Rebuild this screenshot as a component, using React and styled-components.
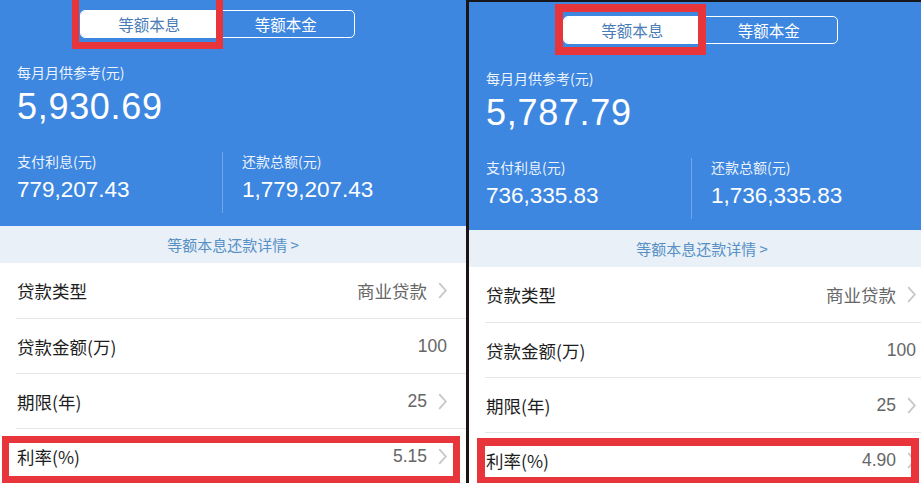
import styled, { createGlobalStyle } from "styled-components"

const GlobalStyle = createGlobalStyle`
  html, body {
    margin: 0;
    padding: 0;
    background: #141414;
  }
  * {
    box-sizing: border-box;
  }
`;

const Screen = styled.div`
  display: flex;
  width: 921px;
  height: 483px;
  overflow: hidden;
  font-family: "Noto Sans CJK SC", "Liberation Sans", sans-serif;
`;

const Splitter = styled.div`
  width: 3px;
  flex-shrink: 0;
  background: #1a1414;
`;

const Panel = styled.div`
  position: relative;
  width: ${p => p.$w}px;
  height: 483px;
  flex-shrink: 0;
  overflow: hidden;
  background: #fff;
  border-top: ${p => p.$topLine}px solid #15171c;
`;

const Inner = styled.div`
  width: 466px;
`;

const Header = styled.div`
  height: ${p => p.$h}px;
  padding: ${p => p.$segTop}px 0 0 17px;
  background: #3e87e0;
  color: #fff;
`;

const Segment = styled.div`
  display: flex;
  width: 275px;
  height: 28px;
  margin-left: ${p => p.$segLeft - 17}px;
  border: 1px solid #fff;
  border-radius: 5px;
  overflow: hidden;
`;

const Tab = styled.div`
  flex: 1;
  display: flex;
  align-items: center;
  justify-content: center;
  font-size: 15.5px;
  background: ${p => (p.$active ? "#fff" : "transparent")};
  color: ${p => (p.$active ? "#4a7db5" : "#fff")};
`;

const Label = styled.div`
  margin-top: ${p => p.$mt}px;
  font-size: 14px;
  line-height: 20px;
  color: rgba(255, 255, 255, 0.92);
`;

const BigValue = styled.div`
  margin-top: 5px;
  font-family: "Liberation Sans", sans-serif;
  font-size: 36px;
  line-height: 40px;
  letter-spacing: 0.7px;
`;

const Stats = styled.div`
  display: flex;
  margin-top: 24px;
`;

const Stat = styled.div`
  width: ${p => p.$w}px;
  padding-left: ${p => p.$pl}px;
`;

const StatValue = styled.div`
  margin-top: 5px;
  font-family: "Liberation Sans", sans-serif;
  font-size: 22.5px;
  line-height: 28px;
`;

const VLine = styled.div`
  width: 1px;
  height: 61px;
  margin-top: 1px;
  background: rgba(255, 255, 255, 0.28);
`;

const Details = styled.div`
  height: 37px;
  display: flex;
  align-items: center;
  justify-content: center;
  background: #e9f0f8;
  color: #5790c4;
  font-size: 15px;
`;

const Row = styled.div`
  display: flex;
  align-items: center;
  height: ${p => p.$h || 55}px;
  margin-left: 16px;
  padding: 0 19px 0 1px;
  border-bottom: ${p => (p.$last ? "none" : "1px solid #e6e6e6")};
`;

const RowLabel = styled.div`
  flex: 1;
  font-size: 17.5px;
  color: #1e1e1e;
`;

const RowValue = styled.div`
  font-size: 17.5px;
  color: #666;
  font-family: ${p => (p.$num ? '"Liberation Sans", sans-serif' : "inherit")};
`;

const Chevron = styled.svg`
  width: 9px;
  height: 17px;
  margin-left: 11px;
`;

const Mark = styled.div`
  position: absolute;
  left: ${p => p.$x}px;
  top: ${p => p.$y}px;
  width: ${p => p.$w}px;
  height: ${p => p.$h}px;
  border: ${p => p.$t}px solid #e8353b;
  pointer-events: none;
`;

const Arrow = () => (
  <Chevron viewBox="0 0 9 17">
    <polyline points="1.2,1.2 7.8,8.5 1.2,15.8" fill="none" stroke="#c6c6cb" strokeWidth="1.8" />
  </Chevron>
);

const Calculator = ({ data, w, topLine, headerH, segTop, segLeft, marks }) => (
  <Panel $w={w} $topLine={topLine}>
    <Inner>
      <Header $h={headerH} $segTop={segTop}>
        <Segment $segLeft={segLeft}>
          <Tab $active>等额本息</Tab>
          <Tab>等额本金</Tab>
        </Segment>
        <Label $mt={24}>每月月供参考(元)</Label>
        <BigValue>{data.monthly}</BigValue>
        <Stats>
          <Stat $w={205}>
            <Label $mt={0}>支付利息(元)</Label>
            <StatValue>{data.interest}</StatValue>
          </Stat>
          <VLine />
          <Stat $pl={19}>
            <Label $mt={0}>还款总额(元)</Label>
            <StatValue>{data.total}</StatValue>
          </Stat>
        </Stats>
      </Header>
      <Details>等额本息还款详情 &gt;</Details>
      <Row $h={56}>
        <RowLabel>贷款类型</RowLabel>
        <RowValue>商业贷款</RowValue>
        <Arrow />
      </Row>
      <Row>
        <RowLabel>贷款金额(万)</RowLabel>
        <RowValue $num>100</RowValue>
      </Row>
      <Row>
        <RowLabel>期限(年)</RowLabel>
        <RowValue $num>25</RowValue>
        <Arrow />
      </Row>
      <Row $last>
        <RowLabel>利率(%)</RowLabel>
        <RowValue $num>{data.rate}</RowValue>
        <Arrow />
      </Row>
    </Inner>
    {marks.map((m, i) => (
      <Mark key={i} $x={m.x} $y={m.y} $w={m.w} $h={m.h} $t={m.t} />
    ))}
  </Panel>
);

const App = () => {
  return (
    <>
      <GlobalStyle />
      <Screen>
        <Calculator
          w={466}
          topLine={0}
          headerH={226}
          segTop={10}
          segLeft={80}
          data={{ monthly: "5,930.69", interest: "779,207.43", total: "1,779,207.43", rate: "5.15" }}
          marks={[
            { x: 72, y: -12, w: 151, h: 61, t: 7 },
            { x: 2, y: 436, w: 458, h: 47, t: 7 },
          ]}
        />
        <Splitter />
        <Calculator
          w={452}
          topLine={2}
          headerH={228}
          segTop={14}
          segLeft={94}
          data={{ monthly: "5,787.79", interest: "736,335.83", total: "1,736,335.83", rate: "4.90" }}
          marks={[
            { x: 86, y: 2, w: 151, h: 51, t: 8 },
            { x: 8, y: 436, w: 442, h: 47, t: 8 },
          ]}
        />
      </Screen>
    </>
  )
}

export default App
